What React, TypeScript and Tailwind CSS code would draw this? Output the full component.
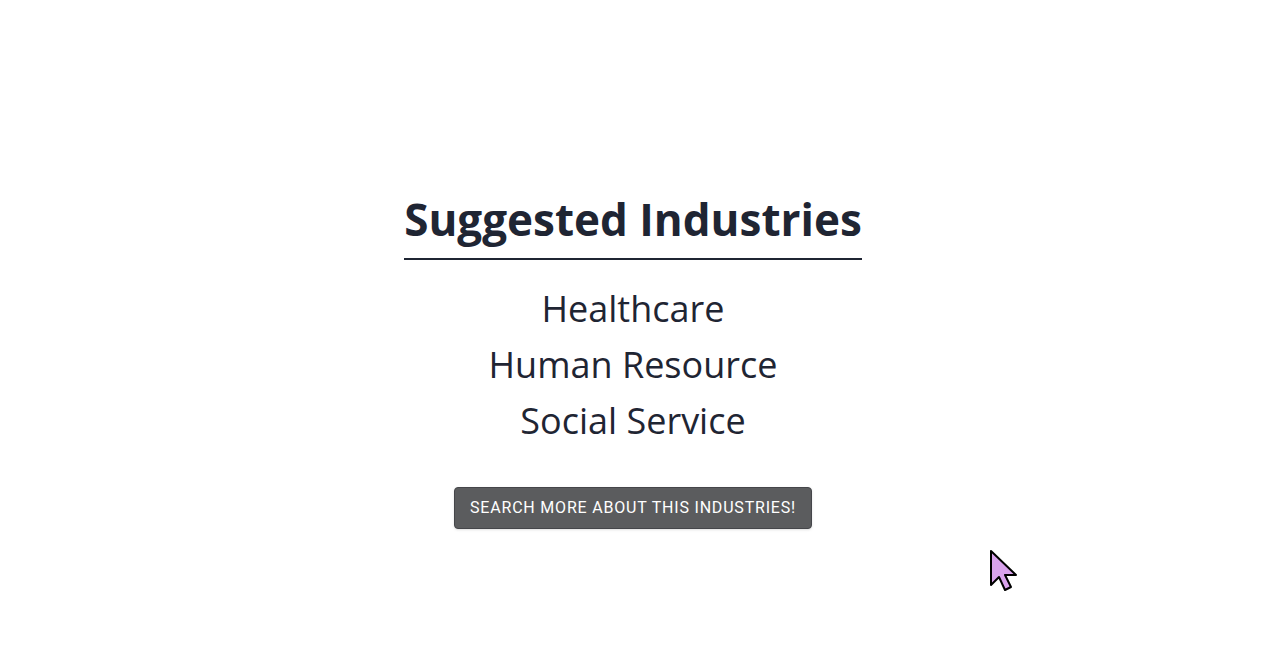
import React from "react";

const industries = ["Healthcare", "Human Resource", "Social Service"];

function Cursor() {
  return (
    <svg
      className="absolute left-[989px] top-[549px]"
      width="32"
      height="44"
      viewBox="0 0 32 44"
    >
      <path
        d="M2 2 L2 36 L10 28 L16 41 L22 38 L16 26 L27 26 Z"
        fill="#d9a3ec"
        stroke="#000"
        strokeWidth="2"
        strokeLinejoin="round"
      />
    </svg>
  );
}

export default function App() {
  return (
    <div className="relative w-full h-[665px] bg-white overflow-hidden">
      <div className="flex flex-col items-center pt-[191px] text-[#1f2533] font-['Open_Sans',sans-serif]">
        <h1 className="text-[44px] font-bold leading-[56px] border-b-2 border-[#1f2533] pb-[11px]">
          Suggested Industries
        </h1>
        <div className="flex flex-col items-center mt-[21px]">
          {industries.map((name) => (
            <p key={name} className="text-[36px] font-medium leading-[56px]">
              {name}
            </p>
          ))}
        </div>
        <button className="mt-[38px] w-[358px] h-[42px] rounded-[4px] bg-[#5b5c5e] border border-[#45464a] text-white text-[16px] tracking-[0.8px] uppercase font-normal font-['Roboto',sans-serif] shadow-sm">
          Search more about this industries!
        </button>
      </div>
      <Cursor />
    </div>
  );
}
